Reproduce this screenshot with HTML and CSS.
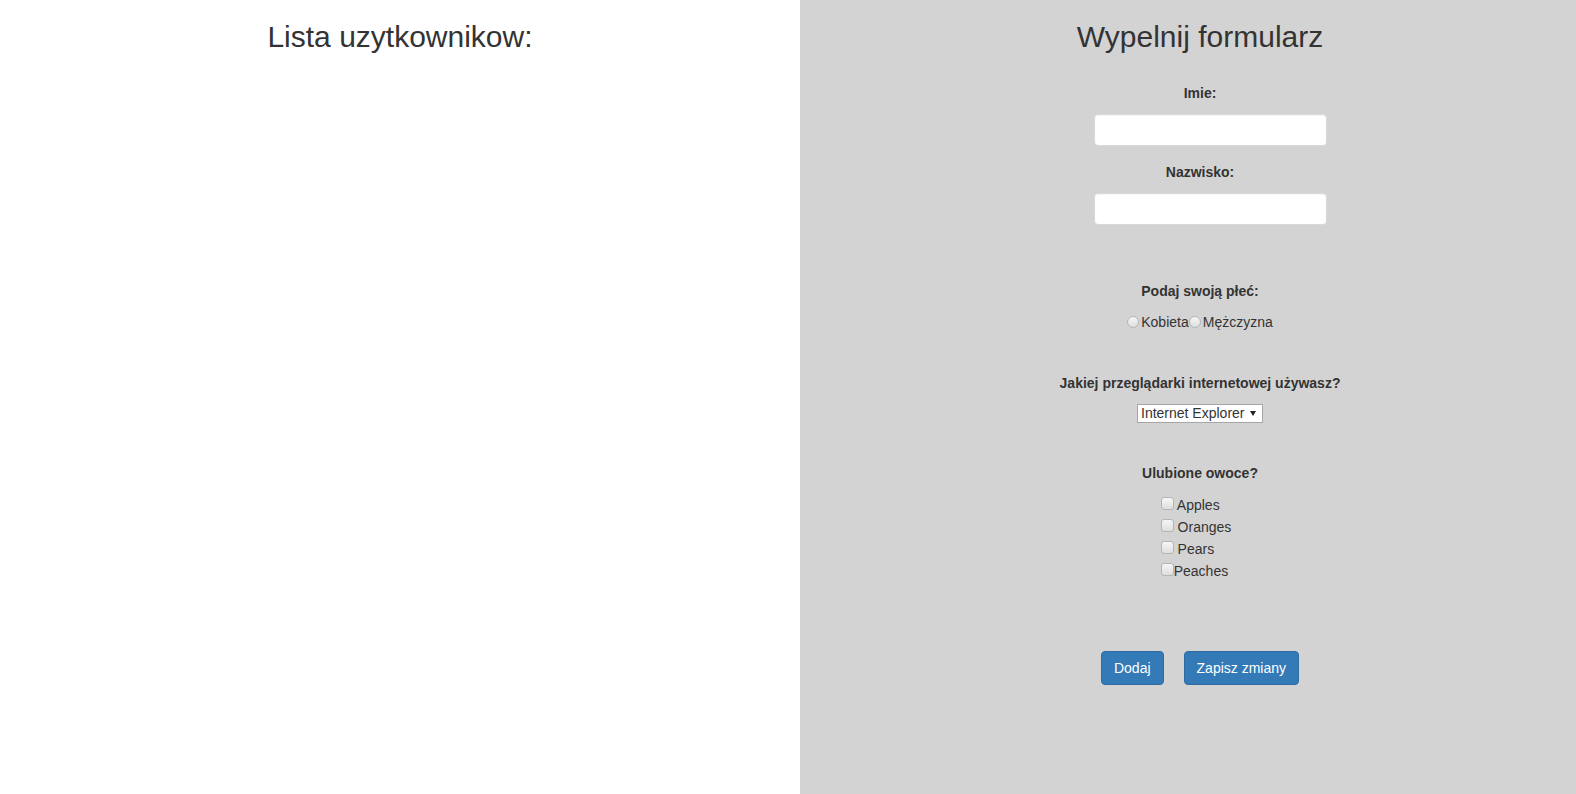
FILE: index.html
```html
<!DOCTYPE html>
<html lang="pl">
<head>
<meta charset="utf-8">
<title>Formularz</title>
<link rel="stylesheet" href="styles.css">
</head>
<body>
<div class="page">
  <section class="panel panel-list">
    <h2 class="title">Lista uzytkownikow:</h2>
  </section>
  <section class="panel panel-form">
    <h2 class="title">Wypelnij formularz</h2>
    <form class="form">
      <label class="lbl lbl-first" for="imie">Imie:</label>
      <div class="input-wrap"><input class="text-input" id="imie" type="text"></div>
      <label class="lbl lbl-second" for="nazwisko">Nazwisko:</label>
      <div class="input-wrap"><input class="text-input" id="nazwisko" type="text"></div>

      <div class="lbl lbl-gender">Podaj swoją płeć:</div>
      <div class="radios"><input class="radio" type="radio" name="plec" id="k"><label for="k">Kobieta</label><input class="radio" type="radio" name="plec" id="m"><label for="m">Mężczyzna</label></div>

      <label class="lbl lbl-browser" for="browser">Jakiej przeglądarki internetowej używasz?</label>
      <div class="select-wrap">
        <select class="select" id="browser">
          <option>Internet Explorer</option>
          <option>Firefox</option>
          <option>Chrome</option>
          <option>Opera</option>
        </select>
      </div>

      <div class="lbl lbl-fruits">Ulubione owoce?</div>
      <div class="fruits">
        <label class="fruit"><input class="check" type="checkbox"> Apples</label>
        <label class="fruit"><input class="check" type="checkbox"> Oranges</label>
        <label class="fruit"><input class="check" type="checkbox"> Pears</label>
        <label class="fruit"><input class="check" type="checkbox">Peaches</label>
      </div>

      <div class="buttons">
        <button type="button" class="btn">Dodaj</button>
        <button type="button" class="btn">Zapisz zmiany</button>
      </div>
    </form>
  </section>
</div>
</body>
</html>
```

FILE: styles.css
```css
html {
  overflow: hidden;
}

body {
  margin: 0;
  font-family: "Liberation Sans", Arial, Helvetica, sans-serif;
  font-size: 14px;
  line-height: 20px;
  color: #333;
}

.page {
  display: grid;
  grid-template-columns: 800px 800px;
  min-height: 100vh;
}

.panel {
  text-align: center;
}

.panel-list {
  background: #fff;
}

.panel-form {
  background: #d3d3d3;
}

.title {
  margin: 20px 0 0;
  font-size: 30px;
  font-weight: 500;
  line-height: 33px;
}

.form {
  display: flex;
  flex-direction: column;
}

.lbl {
  display: block;
  font-weight: bold;
  line-height: 20px;
}

.lbl-first { margin-top: 30px; }
.lbl-second { margin-top: 16px; }
.lbl-gender { margin-top: 56px; }
.lbl-browser { margin-top: 41px; }
.lbl-fruits { margin-top: 40px; }

.input-wrap {
  margin-top: 11px;
  padding-left: 21px;
}

.text-input {
  display: block;
  box-sizing: border-box;
  width: 233px;
  height: 32px;
  margin: 0 auto;
  padding: 6px 12px;
  border: 1px solid #d9d9d9;
  border-radius: 4px;
  background: #fff;
  box-shadow: inset 0 1px 1px rgba(0, 0, 0, 0.04);
  font: inherit;
  color: #555;
}

.radios {
  margin-top: 11px;
  line-height: 20px;
}

.radio,
.check {
  appearance: none;
  -webkit-appearance: none;
  box-sizing: border-box;
  margin: 0;
  border: 1px solid #b5b5b5;
  background: linear-gradient(#f6f6f6, #dedede);
}

.radio {
  width: 12px;
  height: 12px;
  border-radius: 50%;
  vertical-align: -1px;
  margin-right: 2px;
}

.check {
  width: 13px;
  height: 13px;
  border-radius: 3px;
  vertical-align: 0;
}

.select-wrap {
  position: relative;
  width: 126px;
  height: 19px;
  margin: 11px auto 0;
}

.select-wrap::after {
  content: "";
  position: absolute;
  top: 7px;
  right: 7px;
  border-left: 3px solid transparent;
  border-right: 3px solid transparent;
  border-top: 5px solid #222;
  pointer-events: none;
}

.select {
  appearance: none;
  -webkit-appearance: none;
  display: block;
  box-sizing: border-box;
  width: 126px;
  height: 19px;
  margin: 0;
  padding: 0 0 0 3px;
  border: 1px solid #a6a6a6;
  border-radius: 0;
  background: #fff;
  font: inherit;
  font-size: 14px;
  line-height: 17px;
  color: #333;
  text-align: left;
}

.fruits {
  display: table;
  margin: 11px auto 0;
  padding-right: 8px;
  text-align: left;
}

.fruit {
  display: block;
  line-height: 22px;
}

.buttons {
  display: flex;
  justify-content: center;
  gap: 20px;
  margin-top: 69px;
}

.btn {
  box-sizing: border-box;
  height: 34px;
  padding: 6px 12px;
  border: 1px solid #2e6da4;
  border-radius: 4px;
  background: #337ab7;
  color: #fff;
  font: inherit;
  font-size: 14px;
  line-height: 20px;
  cursor: pointer;
}
```
